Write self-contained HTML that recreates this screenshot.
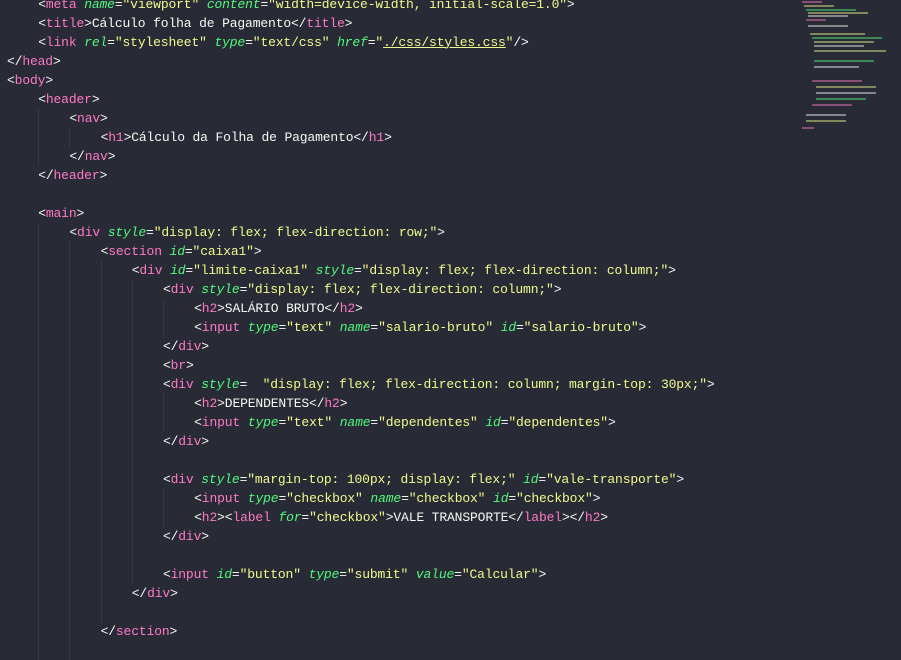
<!DOCTYPE html>
<html><head><meta charset="utf-8"><style>
body{margin:0;background:#282a36;width:901px;height:651px;overflow:hidden;position:relative;font-family:"Liberation Mono",monospace;font-size:13px;color:#f8f8f2;letter-spacing:-0.14px}
#code{position:absolute;left:7px;top:-5.5px}
.l{height:19px;line-height:19px;white-space:pre;display:flex}
.g{display:inline-block;width:31.2px;height:19px;box-sizing:border-box;border-left:1px solid #363846;flex:none}
.g0{border-left:none}
.t{color:#ff79c6}.a{color:#50fa7b;font-style:italic}.s{color:#f1fa8c}.u{text-decoration:underline}
#mm{position:absolute;left:798px;top:0;width:90px;height:135px}
#mm div{position:absolute;height:1.5px;opacity:.45}
</style></head><body>
<div id="code">
<div class="l"><span class="g g0"></span><span>&lt;<span class="t">meta</span> <span class="a">name</span>=<span class="s">"viewport"</span> <span class="a">content</span>=<span class="s">"width=device-width, initial-scale=1.0"</span>&gt;</span></div>
<div class="l"><span class="g g0"></span><span>&lt;<span class="t">title</span>&gt;Cálculo folha de Pagamento&lt;/<span class="t">title</span>&gt;</span></div>
<div class="l"><span class="g g0"></span><span>&lt;<span class="t">link</span> <span class="a">rel</span>=<span class="s">"stylesheet"</span> <span class="a">type</span>=<span class="s">"text/css"</span> <span class="a">href</span>=<span class="s">"<span class="u">./css/styles.css</span>"</span>/&gt;</span></div>
<div class="l"><span>&lt;/<span class="t">head</span>&gt;</span></div>
<div class="l"><span>&lt;<span class="t">body</span>&gt;</span></div>
<div class="l"><span class="g g0"></span><span>&lt;<span class="t">header</span>&gt;</span></div>
<div class="l"><span class="g g0"></span><span class="g"></span><span>&lt;<span class="t">nav</span>&gt;</span></div>
<div class="l"><span class="g g0"></span><span class="g"></span><span class="g"></span><span>&lt;<span class="t">h1</span>&gt;Cálculo da Folha de Pagamento&lt;/<span class="t">h1</span>&gt;</span></div>
<div class="l"><span class="g g0"></span><span class="g"></span><span>&lt;/<span class="t">nav</span>&gt;</span></div>
<div class="l"><span class="g g0"></span><span>&lt;/<span class="t">header</span>&gt;</span></div>
<div class="l"><span class="g g0"></span></div>
<div class="l"><span class="g g0"></span><span>&lt;<span class="t">main</span>&gt;</span></div>
<div class="l"><span class="g g0"></span><span class="g"></span><span>&lt;<span class="t">div</span> <span class="a">style</span>=<span class="s">"display: flex; flex-direction: row;"</span>&gt;</span></div>
<div class="l"><span class="g g0"></span><span class="g"></span><span class="g"></span><span>&lt;<span class="t">section</span> <span class="a">id</span>=<span class="s">"caixa1"</span>&gt;</span></div>
<div class="l"><span class="g g0"></span><span class="g"></span><span class="g"></span><span class="g"></span><span>&lt;<span class="t">div</span> <span class="a">id</span>=<span class="s">"limite-caixa1"</span> <span class="a">style</span>=<span class="s">"display: flex; flex-direction: column;"</span>&gt;</span></div>
<div class="l"><span class="g g0"></span><span class="g"></span><span class="g"></span><span class="g"></span><span class="g"></span><span>&lt;<span class="t">div</span> <span class="a">style</span>=<span class="s">"display: flex; flex-direction: column;"</span>&gt;</span></div>
<div class="l"><span class="g g0"></span><span class="g"></span><span class="g"></span><span class="g"></span><span class="g"></span><span class="g"></span><span>&lt;<span class="t">h2</span>&gt;SALÁRIO BRUTO&lt;/<span class="t">h2</span>&gt;</span></div>
<div class="l"><span class="g g0"></span><span class="g"></span><span class="g"></span><span class="g"></span><span class="g"></span><span class="g"></span><span>&lt;<span class="t">input</span> <span class="a">type</span>=<span class="s">"text"</span> <span class="a">name</span>=<span class="s">"salario-bruto"</span> <span class="a">id</span>=<span class="s">"salario-bruto"</span>&gt;</span></div>
<div class="l"><span class="g g0"></span><span class="g"></span><span class="g"></span><span class="g"></span><span class="g"></span><span>&lt;/<span class="t">div</span>&gt;</span></div>
<div class="l"><span class="g g0"></span><span class="g"></span><span class="g"></span><span class="g"></span><span class="g"></span><span>&lt;<span class="t">br</span>&gt;</span></div>
<div class="l"><span class="g g0"></span><span class="g"></span><span class="g"></span><span class="g"></span><span class="g"></span><span>&lt;<span class="t">div</span> <span class="a">style</span>=  <span class="s">"display: flex; flex-direction: column; margin-top: 30px;"</span>&gt;</span></div>
<div class="l"><span class="g g0"></span><span class="g"></span><span class="g"></span><span class="g"></span><span class="g"></span><span class="g"></span><span>&lt;<span class="t">h2</span>&gt;DEPENDENTES&lt;/<span class="t">h2</span>&gt;</span></div>
<div class="l"><span class="g g0"></span><span class="g"></span><span class="g"></span><span class="g"></span><span class="g"></span><span class="g"></span><span>&lt;<span class="t">input</span> <span class="a">type</span>=<span class="s">"text"</span> <span class="a">name</span>=<span class="s">"dependentes"</span> <span class="a">id</span>=<span class="s">"dependentes"</span>&gt;</span></div>
<div class="l"><span class="g g0"></span><span class="g"></span><span class="g"></span><span class="g"></span><span class="g"></span><span>&lt;/<span class="t">div</span>&gt;</span></div>
<div class="l"><span class="g g0"></span><span class="g"></span><span class="g"></span><span class="g"></span><span class="g"></span></div>
<div class="l"><span class="g g0"></span><span class="g"></span><span class="g"></span><span class="g"></span><span class="g"></span><span>&lt;<span class="t">div</span> <span class="a">style</span>=<span class="s">"margin-top: 100px; display: flex;"</span> <span class="a">id</span>=<span class="s">"vale-transporte"</span>&gt;</span></div>
<div class="l"><span class="g g0"></span><span class="g"></span><span class="g"></span><span class="g"></span><span class="g"></span><span class="g"></span><span>&lt;<span class="t">input</span> <span class="a">type</span>=<span class="s">"checkbox"</span> <span class="a">name</span>=<span class="s">"checkbox"</span> <span class="a">id</span>=<span class="s">"checkbox"</span>&gt;</span></div>
<div class="l"><span class="g g0"></span><span class="g"></span><span class="g"></span><span class="g"></span><span class="g"></span><span class="g"></span><span>&lt;<span class="t">h2</span>&gt;&lt;<span class="t">label</span> <span class="a">for</span>=<span class="s">"checkbox"</span>&gt;VALE TRANSPORTE&lt;/<span class="t">label</span>&gt;&lt;/<span class="t">h2</span>&gt;</span></div>
<div class="l"><span class="g g0"></span><span class="g"></span><span class="g"></span><span class="g"></span><span class="g"></span><span>&lt;/<span class="t">div</span>&gt;</span></div>
<div class="l"><span class="g g0"></span><span class="g"></span><span class="g"></span><span class="g"></span><span class="g"></span></div>
<div class="l"><span class="g g0"></span><span class="g"></span><span class="g"></span><span class="g"></span><span class="g"></span><span>&lt;<span class="t">input</span> <span class="a">id</span>=<span class="s">"button"</span> <span class="a">type</span>=<span class="s">"submit"</span> <span class="a">value</span>=<span class="s">"Calcular"</span>&gt;</span></div>
<div class="l"><span class="g g0"></span><span class="g"></span><span class="g"></span><span class="g"></span><span>&lt;/<span class="t">div</span>&gt;</span></div>
<div class="l"><span class="g g0"></span><span class="g"></span><span class="g"></span><span class="g"></span></div>
<div class="l"><span class="g g0"></span><span class="g"></span><span class="g"></span><span>&lt;/<span class="t">section</span>&gt;</span></div>
<div class="l"><span class="g g0"></span><span class="g"></span><span class="g"></span></div>
</div>
<div id="mm">
<div style="left:4px;top:1px;width:20px;background:#ff79c6"></div>
<div style="left:6px;top:5px;width:30px;background:#f1fa8c"></div>
<div style="left:8px;top:9px;width:50px;background:#50fa7b"></div>
<div style="left:10px;top:12px;width:60px;background:#f1fa8c"></div>
<div style="left:10px;top:15px;width:40px;background:#f8f8f2"></div>
<div style="left:8px;top:19px;width:20px;background:#ff79c6"></div>
<div style="left:10px;top:25px;width:40px;background:#f8f8f2"></div>
<div style="left:12px;top:33px;width:55px;background:#f1fa8c"></div>
<div style="left:14px;top:37px;width:70px;background:#50fa7b"></div>
<div style="left:16px;top:41px;width:60px;background:#f1fa8c"></div>
<div style="left:16px;top:45px;width:50px;background:#f8f8f2"></div>
<div style="left:16px;top:50px;width:72px;background:#f1fa8c"></div>
<div style="left:16px;top:60px;width:60px;background:#50fa7b"></div>
<div style="left:16px;top:66px;width:45px;background:#f8f8f2"></div>
<div style="left:14px;top:80px;width:50px;background:#ff79c6"></div>
<div style="left:18px;top:86px;width:60px;background:#f1fa8c"></div>
<div style="left:18px;top:92px;width:60px;background:#f8f8f2"></div>
<div style="left:18px;top:98px;width:50px;background:#50fa7b"></div>
<div style="left:14px;top:104px;width:40px;background:#ff79c6"></div>
<div style="left:8px;top:114px;width:40px;background:#f8f8f2"></div>
<div style="left:8px;top:120px;width:40px;background:#f1fa8c"></div>
<div style="left:4px;top:127px;width:12px;background:#ff79c6"></div>
</div>
</body></html>
